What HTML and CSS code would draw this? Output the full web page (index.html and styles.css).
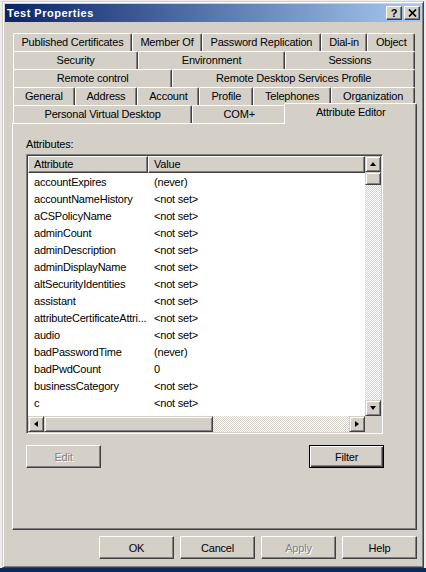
FILE: index.html
```html
<!DOCTYPE html>
<html>
<head>
<meta charset="utf-8">
<title>Test Properties</title>
<link rel="stylesheet" href="styles.css">
</head>
<body>
<div class="window">
  <div class="titlebar">
    <span class="title">Test Properties</span>
    <div class="tbtns">
      <span class="tbtn qmark">?</span>
      <span class="tbtn xbtn"><svg width="9" height="8" viewBox="0 0 9 8"><path d="M1 0.5 L8 7.5 M8 0.5 L1 7.5" stroke="#000" stroke-width="1.7" fill="none"/></svg></span>
    </div>
  </div>

  <div class="tabs">
    <div class="tabrow">
      <span class="tab">Published Certificates</span>
      <span class="tab">Member Of</span>
      <span class="tab">Password Replication</span>
      <span class="tab">Dial-in</span>
      <span class="tab">Object</span>
    </div>
    <div class="tabrow">
      <span class="tab">Security</span>
      <span class="tab">Environment</span>
      <span class="tab">Sessions</span>
    </div>
    <div class="tabrow">
      <span class="tab">Remote control</span>
      <span class="tab">Remote Desktop Services Profile</span>
    </div>
    <div class="tabrow">
      <span class="tab">General</span>
      <span class="tab">Address</span>
      <span class="tab">Account</span>
      <span class="tab">Profile</span>
      <span class="tab">Telephones</span>
      <span class="tab">Organization</span>
    </div>
    <div class="tabrow">
      <span class="tab">Personal Virtual Desktop</span>
      <span class="tab">COM+</span>
      <span class="tab selected">Attribute Editor</span>
    </div>
  </div>

  <div class="panel">
    <div class="label">Attributes:</div>
    <div class="listbox">
      <div class="listview">
        <div class="lhead">
          <div class="hcell c1">Attribute</div>
          <div class="hcell c2">Value</div>
        </div>
        <div class="lrows">
          <div class="lrow"><span class="c1">accountExpires</span><span class="c2">(never)</span></div>
          <div class="lrow"><span class="c1">accountNameHistory</span><span class="c2">&lt;not set&gt;</span></div>
          <div class="lrow"><span class="c1">aCSPolicyName</span><span class="c2">&lt;not set&gt;</span></div>
          <div class="lrow"><span class="c1">adminCount</span><span class="c2">&lt;not set&gt;</span></div>
          <div class="lrow"><span class="c1">adminDescription</span><span class="c2">&lt;not set&gt;</span></div>
          <div class="lrow"><span class="c1">adminDisplayName</span><span class="c2">&lt;not set&gt;</span></div>
          <div class="lrow"><span class="c1">altSecurityIdentities</span><span class="c2">&lt;not set&gt;</span></div>
          <div class="lrow"><span class="c1">assistant</span><span class="c2">&lt;not set&gt;</span></div>
          <div class="lrow"><span class="c1">attributeCertificateAttri...</span><span class="c2">&lt;not set&gt;</span></div>
          <div class="lrow"><span class="c1">audio</span><span class="c2">&lt;not set&gt;</span></div>
          <div class="lrow"><span class="c1">badPasswordTime</span><span class="c2">(never)</span></div>
          <div class="lrow"><span class="c1">badPwdCount</span><span class="c2">0</span></div>
          <div class="lrow"><span class="c1">businessCategory</span><span class="c2">&lt;not set&gt;</span></div>
          <div class="lrow"><span class="c1">c</span><span class="c2">&lt;not set&gt;</span></div>
        </div>
      </div>
      <div class="vscroll">
        <span class="sbtn"><i class="arr up"></i></span>
        <span class="thumb vthumb"></span>
        <span class="track"></span>
        <span class="sbtn"><i class="arr down"></i></span>
      </div>
      <div class="hscroll">
        <span class="sbtn"><i class="arr left"></i></span>
        <span class="thumb hthumb"></span>
        <span class="track"></span>
        <span class="sbtn"><i class="arr right"></i></span>
      </div>
      <div class="corner"></div>
    </div>
    <div class="actions">
      <span class="btn disabled">Edit</span>
      <span class="btn default">Filter</span>
    </div>
  </div>

  <div class="footer">
    <span class="btn">OK</span>
    <span class="btn">Cancel</span>
    <span class="btn disabled">Apply</span>
    <span class="btn">Help</span>
  </div>
</div>
</body>
</html>
```

FILE: styles.css
```css
html {
  background: #0b2a5a;
}
body {
  margin: 0;
  height: 568px;
  background: #ececec;
  font-family: "Liberation Sans", Arial, sans-serif;
  font-size: 11px;
  letter-spacing: -0.2px;
  color: #000;
}
.window {
  margin: 1px 0 0 2px;
  width: 422px;
  height: 567px;
  box-sizing: border-box;
  background: #d4d0c8;
  border: 1px solid;
  border-color: #d4d0c8 #404040 #404040 #d4d0c8;
  box-shadow: inset 1px 1px #fff, inset -1px -1px #808080;
  padding: 2px;
}
.titlebar {
  height: 18px;
  display: flex;
  align-items: center;
  justify-content: space-between;
  background: linear-gradient(to right, #0a246a, #a6caf0);
  padding-left: 2px;
}
.title {
  color: #fff;
  font-weight: bold;
  font-size: 11px;
  letter-spacing: 0.5px;
}
.tbtns {
  display: flex;
  gap: 2px;
  margin-right: 1px;
}
.tbtn {
  width: 16px;
  height: 14px;
  box-sizing: border-box;
  background: #d4d0c8;
  border: 1px solid;
  border-color: #fff #404040 #404040 #fff;
  box-shadow: inset -1px -1px #808080;
  display: flex;
  align-items: center;
  justify-content: center;
  font-weight: bold;
  font-size: 11px;
  line-height: 12px;
  letter-spacing: 0;
}
.tabs {
  margin: 11px 0 0 8px;
  width: 402px;
}
.tabrow {
  display: flex;
  height: 18px;
}
.tab {
  flex: 1 1 auto;
  box-sizing: border-box;
  border-top: 1px solid #fff;
  border-left: 1px solid #fff;
  border-right: 1px solid #404040;
  box-shadow: inset -1px 0 #808080;
  border-radius: 2px 2px 0 0;
  text-align: center;
  white-space: nowrap;
  line-height: 17px;
  padding: 0 5px;
  background: #d4d0c8;
}
.tab.selected {
  position: relative;
  z-index: 1;
  margin: -2px -2px -1px -2px;
  line-height: 16px;
}
.panel {
  margin-left: 7px;
  width: 405px;
  height: 407px;
  box-sizing: border-box;
  border-top: 1px solid #fff;
  border-left: 1px solid #fff;
  border-right: 1px solid #404040;
  border-bottom: 1px solid #404040;
  box-shadow: inset -1px -1px #808080;
  padding: 14px 0 0 13px;
}
.label {
  line-height: 13px;
  margin-bottom: 3px;
}
.listbox {
  width: 357px;
  height: 280px;
  box-sizing: border-box;
  border: 1px solid;
  border-color: #808080 #fff #fff #808080;
  box-shadow: inset 1px 1px #404040, inset -1px -1px #d4d0c8;
  padding: 1px;
  display: grid;
  grid-template-columns: 337px 16px;
  grid-template-rows: 260px 16px;
}
.listview {
  background: #fff;
  overflow: hidden;
}
.lhead {
  display: flex;
  height: 17px;
}
.hcell {
  box-sizing: border-box;
  background: #d4d0c8;
  border-top: 1px solid #fff;
  border-left: 1px solid #fff;
  border-right: 1px solid #404040;
  border-bottom: 1px solid #404040;
  box-shadow: inset -1px -1px #808080;
  padding-left: 5px;
  line-height: 15px;
  white-space: nowrap;
}
.hcell.c1 {
  width: 120px;
}
.hcell.c2 {
  width: 217px;
}
.lrows {
  padding-top: 1px;
}
.lrow {
  display: flex;
  height: 17px;
  line-height: 17px;
  white-space: nowrap;
}
.lrow .c1 {
  width: 120px;
  padding-left: 6px;
  box-sizing: border-box;
  overflow: hidden;
}
.lrow .c2 {
  padding-left: 6px;
}
.vscroll {
  display: flex;
  flex-direction: column;
}
.hscroll {
  display: flex;
}
.sbtn, .thumb {
  box-sizing: border-box;
  width: 16px;
  height: 16px;
  background: #d4d0c8;
  border: 1px solid;
  border-color: #d4d0c8 #404040 #404040 #d4d0c8;
  box-shadow: inset 1px 1px #fff, inset -1px -1px #808080;
  display: flex;
  align-items: center;
  justify-content: center;
  flex: none;
}
.vthumb {
  height: 13px;
}
.hthumb {
  width: 169px;
}
.track {
  flex: 1;
  background: repeating-conic-gradient(#d4d0c8 0 25%, #fff 0 50%) 0 0 / 2px 2px;
}
.corner {
  background: #d4d0c8;
}
.arr {
  width: 0;
  height: 0;
  border-style: solid;
  border-color: transparent;
}
.arr.up {
  border-width: 0 3.5px 4px 3.5px;
  border-bottom-color: #000;
}
.arr.down {
  border-width: 4px 3.5px 0 3.5px;
  border-top-color: #000;
}
.arr.left {
  border-width: 3.5px 4px 3.5px 0;
  border-right-color: #000;
}
.arr.right {
  border-width: 3.5px 0 3.5px 4px;
  border-left-color: #000;
}
.actions {
  display: flex;
  justify-content: space-between;
  width: 358px;
  margin-top: 11px;
}
.btn {
  width: 75px;
  height: 23px;
  box-sizing: border-box;
  background: #d4d0c8;
  border: 1px solid;
  border-color: #fff #404040 #404040 #fff;
  box-shadow: inset -1px -1px #808080;
  display: flex;
  align-items: center;
  justify-content: center;
  color: #000;
}
.btn.default {
  border-color: #000;
  box-shadow: inset 1px 1px #fff, inset -1px -1px #404040, inset -2px -2px #808080;
}
.btn.disabled {
  color: #808080;
  text-shadow: 1px 1px #fff;
}
.footer {
  display: flex;
  justify-content: flex-end;
  gap: 6px;
  margin-top: 6px;
  padding-right: 4px;
}
```
